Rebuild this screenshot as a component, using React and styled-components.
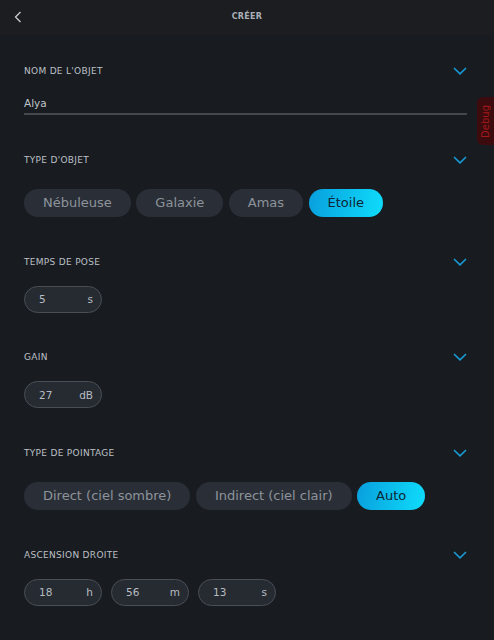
import React from 'react'
import styled, { createGlobalStyle } from 'styled-components'

const GlobalStyle = createGlobalStyle`
  html, body {
    margin: 0;
    padding: 0;
    background-color: #181b20;
  }
  body {
    font-family: 'DejaVu Sans', 'Noto Sans', sans-serif;
  }
`

const Page = styled.div`
  position: relative;
  width: 494px;
  min-height: 640px;
  background-color: #181b20;
  overflow: hidden;
`

const TopBar = styled.header`
  display: flex;
  align-items: center;
  justify-content: center;
  position: relative;
  height: 35px;
  background-color: #1c1d20;
`

const BackButton = styled.button`
  position: absolute;
  left: 10px;
  top: 8px;
  display: flex;
  align-items: center;
  justify-content: center;
  width: 16px;
  height: 18px;
  padding: 0;
  border: none;
  background: none;
`

const Title = styled.h1`
  margin: 0;
  font-size: 8px;
  font-weight: bold;
  letter-spacing: 0.3px;
  color: #a9b0b9;
  margin-top: -2px;
`

const Section = styled.section`
  display: flex;
  flex-direction: column;
  padding: 28px 27px 8.5px 24px;
`

const SectionHead = styled.div`
  display: flex;
  align-items: center;
  justify-content: space-between;
  height: 16px;
`

const Label = styled.span`
  font-size: 9px;
  letter-spacing: 0.3px;
  color: #bcc0c6;
`

const TextField = styled.div`
  margin-top: 15px;
  height: 19px;
  line-height: 19px;
  font-size: 10.5px;
  color: #bfc3c9;
  border-bottom: 2px solid #43484e;
`

const ChipRow = styled.div`
  display: flex;
  gap: 5.5px;
  margin-top: 21px;
`

const Chip = styled.button`
  height: 28.5px;
  padding: 0 19px;
  border: none;
  border-radius: 15px;
  font-family: inherit;
  font-size: 13px;
  color: ${(p) => (p.$active ? '#0e2535' : '#8d939b')};
  background: ${(p) =>
    p.$active ? 'linear-gradient(100deg, #089fdd 0%, #0fdcfb 100%)' : '#2a2f37'};
`

const PillRow = styled.div`
  display: flex;
  gap: 9px;
  margin-top: 16px;
`

const Pill = styled.div`
  display: flex;
  align-items: center;
  justify-content: space-between;
  box-sizing: border-box;
  width: 78px;
  height: 27px;
  padding: 0 8px 0 14px;
  border: 1px solid #4a4f56;
  border-radius: 14px;
  background-color: #262b31;
  font-size: 10.5px;
  color: #b7bcc3;
`

const DebugTab = styled.div`
  position: absolute;
  right: 0;
  top: 97px;
  width: 17px;
  height: 48px;
  display: flex;
  align-items: center;
  justify-content: center;
  border-radius: 6px 0 0 6px;
  background-color: #3c0b0d;
`

const DebugText = styled.span`
  writing-mode: vertical-rl;
  transform: rotate(180deg);
  font-size: 10px;
  color: #a3171a;
`

const Chevron = () => (
  <svg width="14" height="8" viewBox="0 0 14 8">
    <polyline points="1,1 7,6.8 13,1" fill="none" stroke="#179ad6" strokeWidth="1.6" />
  </svg>
)

const BackIcon = () => (
  <svg width="8" height="12" viewBox="0 0 8 12">
    <polyline points="6.5,1 1.5,6 6.5,11" fill="none" stroke="#c9ccd1" strokeWidth="1.3" />
  </svg>
)

const Field = ({ value, unit }) => (
  <Pill>
    <span>{value}</span>
    <span>{unit}</span>
  </Pill>
)

const Head = ({ children }) => (
  <SectionHead>
    <Label>{children}</Label>
    <Chevron />
  </SectionHead>
)

const App = () => {
  return (
    <Page>
      <GlobalStyle />
      <TopBar>
        <BackButton>
          <BackIcon />
        </BackButton>
        <Title>CRÉER</Title>
      </TopBar>

      <Section>
        <Head>NOM DE L'OBJET</Head>
        <TextField>Alya</TextField>
      </Section>

      <Section>
        <Head>TYPE D'OBJET</Head>
        <ChipRow>
          <Chip>Nébuleuse</Chip>
          <Chip>Galaxie</Chip>
          <Chip>Amas</Chip>
          <Chip $active>Étoile</Chip>
        </ChipRow>
      </Section>

      <Section>
        <Head>TEMPS DE POSE</Head>
        <PillRow>
          <Field value="5" unit="s" />
        </PillRow>
      </Section>

      <Section>
        <Head>GAIN</Head>
        <PillRow>
          <Field value="27" unit="dB" />
        </PillRow>
      </Section>

      <Section>
        <Head>TYPE DE POINTAGE</Head>
        <ChipRow>
          <Chip>Direct (ciel sombre)</Chip>
          <Chip>Indirect (ciel clair)</Chip>
          <Chip $active>Auto</Chip>
        </ChipRow>
      </Section>

      <Section>
        <Head>ASCENSION DROITE</Head>
        <PillRow>
          <Field value="18" unit="h" />
          <Field value="56" unit="m" />
          <Field value="13" unit="s" />
        </PillRow>
      </Section>

      <DebugTab>
        <DebugText>Debug</DebugText>
      </DebugTab>
    </Page>
  )
}

export default App
